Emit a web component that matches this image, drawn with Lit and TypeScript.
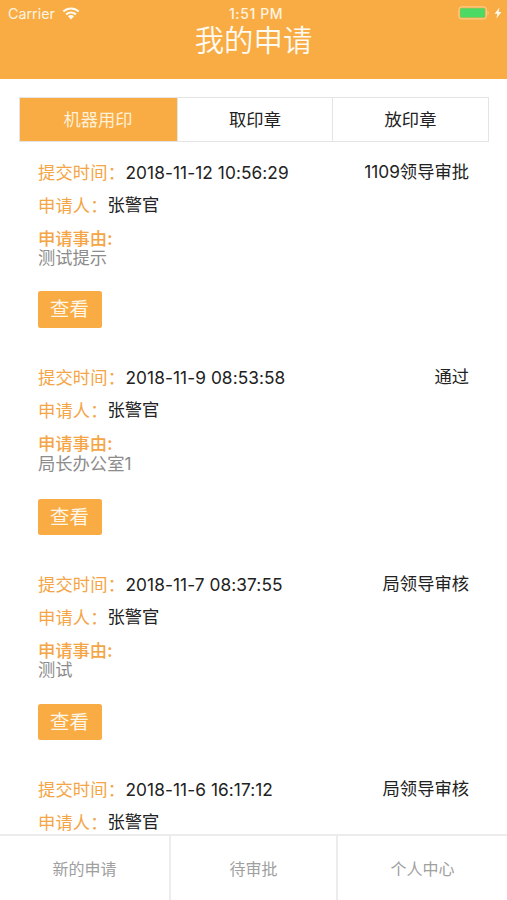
import { LitElement, html, css, nothing } from "lit";
import { customElement, property } from "lit/decorators.js";
import { classMap } from "lit/directives/class-map.js";

interface Application {
  time: string;
  applicant: string;
  status: string;
  reason?: string;
}

const applications: Application[] = [
  { time: "2018-11-12 10:56:29", applicant: "张警官", reason: "测试提示", status: "1109领导审批" },
  { time: "2018-11-9 08:53:58", applicant: "张警官", reason: "局长办公室1", status: "通过" },
  { time: "2018-11-7 08:37:55", applicant: "张警官", reason: "测试", status: "局领导审核" },
  { time: "2018-11-6 16:17:12", applicant: "张警官", status: "局领导审核" },
];

@customElement("status-bar")
export class StatusBar extends LitElement {
  static styles = css`
    :host {
      display: grid;
      grid-template-columns: 1fr auto 1fr;
      align-items: center;
      height: 27px;
      padding: 0 5px 0 8px;
      color: #fff4e2;
      font: 14.3px/27px Inter, sans-serif;
    }
    .carrier { display: flex; align-items: center; gap: 7px; }
    .time { font-weight: 500; font-size: 14px; letter-spacing: 0.6px; padding-left: 2px; }
    .power { display: flex; align-items: center; justify-content: flex-end; gap: 3px; }
    svg { display: block; }
    .wifi { margin-top: -1px; }
    .battery { margin-top: -1px; }
    .bolt { margin-top: -1px; }
  `;
  render() {
    return html`
      <div class="carrier">
        <span>Carrier</span>
        <svg class="wifi" width="18" height="13" viewBox="0 0 18 13">
          <path d="M1.3 4.6a11 11 0 0 1 15.4 0M4.1 7.5a7 7 0 0 1 9.8 0" fill="none" stroke="#fffaf0" stroke-width="2.1"/>
          <path d="M9 12.4 5.9 9.3a4.4 4.4 0 0 1 6.2 0z" fill="#fffaf0"/>
        </svg>
      </div>
      <div class="time">1:51 PM</div>
      <div class="power">
        <svg class="battery" width="33" height="14" viewBox="0 0 33 14">
          <rect x="0.9" y="0.9" width="27.4" height="12" rx="2.6" fill="none" stroke="#fcd39b" stroke-width="1"/>
          <rect x="2.2" y="2.2" width="24.8" height="9.4" rx="1.2" fill="#4cd964"/>
          <path d="M29.6 4.9a2.4 2.4 0 0 1 0 4z" fill="#fcd39b"/>
        </svg>
        <svg class="bolt" width="8" height="12" viewBox="0 0 8 12">
          <path d="M5.4 0.6.6 6.8h2.8L2.4 11.4 7.4 5H4.6z" fill="#fffaf0"/>
        </svg>
      </div>
    `;
  }
}

@customElement("application-item")
export class ApplicationItem extends LitElement {
  @property({ attribute: false }) item!: Application;

  static styles = css`
    :host {
      display: block;
      height: 205px;
      font: 17.3px/33px Inter, "Noto Sans CJK SC", sans-serif;
      color: #222;
    }
    :host(.tall) { height: 207.5px; }
    .row { display: flex; height: 33px; white-space: nowrap; }
    .label {
      color: #f4a545;
      width: 87.5px;
      line-height: 31px;
      letter-spacing: 0.15px;
      font-family: "Noto Sans CJK SC", sans-serif;
    }
    .label.short { width: 69.5px; }
    .date { letter-spacing: 0.07px; line-height: 33px; }
    .name { line-height: 31px; }
    .status { margin-left: auto; line-height: 32px; }
    .reason-label {
      color: #f4a545;
      line-height: 20px;
      margin-top: 6px;
      font-family: "Noto Sans CJK SC", sans-serif;
      font-weight: 500;
    }
    .reason { color: #8c8c8c; height: 20.5px; line-height: 20.5px; }
    :host(.tall) .reason { height: 23px; line-height: 22px; }
    .view {
      display: block;
      box-sizing: border-box;
      width: 64px;
      height: 36.5px;
      margin-top: 23px;
      padding: 0 1px 2px 0;
      border: 0;
      border-radius: 2.5px;
      background: #f8ac43;
      color: #fff6e8;
      font: 19.4px/34px "Noto Sans CJK SC", sans-serif;
    }
  `;
  render() {
    const { time, applicant, reason, status } = this.item;
    return html`
      <div class="row">
        <span class="label">提交时间：</span>
        <span class="date">${time}</span>
        <span class="status">${status}</span>
      </div>
      <div class="row">
        <span class="label short">申请人：</span>
        <span class="name">${applicant}</span>
      </div>
      ${reason
        ? html`
            <div class="reason-label">申请事由:</div>
            <div class="reason">${reason}</div>
            <button class="view">查看</button>
          `
        : nothing}
    `;
  }
}

@customElement("app-root")
export class AppRoot extends LitElement {
  static styles = css`
    :host {
      display: flex;
      flex-direction: column;
      height: 900px;
      background: #fff;
      overflow: hidden;
      font-family: Inter, "Noto Sans CJK SC", sans-serif;
    }
    header { flex: none; height: 79px; background: #f8ac43; }
    h1 {
      margin: 0;
      text-align: center;
      color: #fffaf2;
      font: 350 29.4px/23px "Noto Sans CJK SC", sans-serif;
    }
    .tabs {
      flex: none;
      display: grid;
      grid-template-columns: 157px 155px 1fr;
      box-sizing: border-box;
      height: 45px;
      margin: 18px 18px 0 19px;
      border: 1px solid #e4e4e4;
    }
    .tab {
      color: #222;
      text-align: center;
      font-size: 17.3px;
      line-height: 43px;
      border-left: 1px solid #e4e4e4;
    }
    .tab.active { background: #f8ac43; color: #fff0d8; border-left: 0; padding-right: 1px; }
    main { flex: 1; min-height: 0; overflow: hidden; padding: 13.5px 38px 0; }
    nav {
      flex: none;
      display: grid;
      grid-template-columns: 169px 167px 1fr;
      height: 64px;
      border-top: 2px solid #ececec;
    }
    nav span {
      text-align: center;
      color: #a0a0a0;
      font-size: 16px;
      line-height: 66px;
    }
    nav span + span { border-left: 2px solid #ececec; }
  `;
  render() {
    return html`
      <header>
        <status-bar></status-bar>
        <h1>我的申请</h1>
      </header>
      <div class="tabs">
        ${["机器用印", "取印章", "放印章"].map(
          (name, i) => html`<div class=${classMap({ tab: true, active: i === 0 })}>${name}</div>`
        )}
      </div>
      <main>
        ${applications.map(
          (item) => html`<application-item
            class=${classMap({ tall: /\d/.test(item.reason ?? "") })}
            .item=${item}
          ></application-item>`
        )}
      </main>
      <nav>
        ${["新的申请", "待审批", "个人中心"].map((name) => html`<span>${name}</span>`)}
      </nav>
    `;
  }
}
